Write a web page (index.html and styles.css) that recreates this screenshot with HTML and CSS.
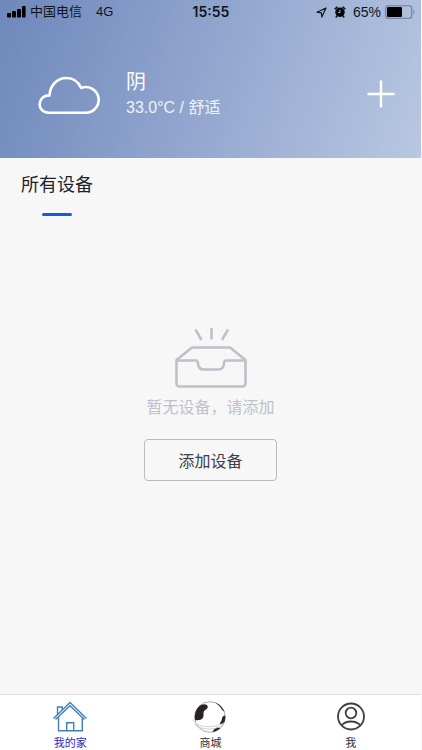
FILE: index.html
```html
<!DOCTYPE html>
<html lang="zh-CN">
<head>
<meta charset="utf-8">
<meta name="viewport" content="width=device-width, initial-scale=1">
<title>我的家</title>
<link rel="stylesheet" href="styles.css">
</head>
<body>
<div class="app">
  <header class="hero">
    <div class="status">
      <div class="status-side">
        <svg class="signal" width="19" height="12" viewBox="0 0 19 12" aria-hidden="true">
          <rect x="0" y="7" width="4" height="4.500" rx="1"/><rect x="5" y="5" width="4" height="6.500" rx="1"/><rect x="10" y="3" width="4" height="8.500" rx="1"/><rect x="15" y="0" width="3.600" height="11.500" rx="1"/>
        </svg>
        <span class="carrier">中国电信</span>
        <span class="network">4G</span>
      </div>
      <time class="clock">15:55</time>
      <div class="status-side status-right">
        <svg width="11" height="11" viewBox="0 0 11 11" aria-hidden="true"><path d="M10 1 1 5.2l4.3.6.5 4.2z" fill="none" stroke="#10131c" stroke-width="1.2" stroke-linejoin="round"/></svg>
        <svg class="alarm" width="12" height="12" viewBox="0 0 12 12" aria-hidden="true"><circle cx="6" cy="6.2" r="4.700"/><path d="M1.200 2.800 3 1.200M10.800 2.800 9 1.200M3 10l-.8 1M9 10l.8 1" stroke="#10131c" stroke-width="1.600" stroke-linecap="round"/><path d="M6 3.800v2.800H4.200" fill="none" stroke="#a9badb"/></svg>
        <span class="percent">65%</span>
        <svg width="30" height="14" viewBox="0 0 30 14" aria-hidden="true"><rect x=".7" y=".7" width="26" height="12.6" rx="2.6" fill="none" stroke="#6f7c95" stroke-width="1.1"/><rect x="2" y="2" width="15" height="10" rx="1.2"/><path d="M28.3 4.8c1.6.8 1.6 3.6 0 4.4z" fill="#6f7c95"/></svg>
      </div>
    </div>
    <div class="weather">
      <svg class="cloud" width="64" height="42" viewBox="0 0 64 42" aria-hidden="true"><path d="M11.500 39.700C-.5 39.500-.5 22.500 12.500 22.400 13 12.500 20 5 29.500 5c7 0 12 4 14.700 10A12.800 12.800 0 1 1 49.500 39.700z" fill="none" stroke="#fff" stroke-width="2.600" stroke-linejoin="round"/></svg>
      <div class="weather-text">
        <h1 class="condition">阴</h1>
        <p class="temperature">33.0°C / 舒适</p>
      </div>
      <button class="plus" type="button" aria-label="添加">
        <svg width="28" height="28" viewBox="0 0 28 28" aria-hidden="true"><path d="M14 .5v27M.5 14h27" stroke="#fff" stroke-width="2.400"/></svg>
      </button>
    </div>
  </header>
  <main class="content">
    <h2 class="tab">所有设备</h2>
    <section class="empty">
      <svg width="74" height="62" viewBox="0 0 74 62" fill="none" stroke="#bfc1c9" stroke-width="2.600" stroke-linejoin="round" aria-hidden="true">
        <path d="M21.500 1.500 27.500 12M37.500 0v11.500M54 1.500 48 12"/>
        <path d="M2.500 32 18 19.500h38L71.500 32v23.500a3 3 0 0 1-3 3H5.500a3 3 0 0 1-3-3z"/>
        <path d="M2.500 32.500h19.500c1.500 0 1.800 1 2 3 .3 3.700 2.300 6 5.500 6h15c3.200 0 5.200-2.300 5.500-6 .2-2 .5-3 2-3h19.500"/>
      </svg>
      <p class="empty-text">暂无设备，请添加</p>
      <button class="add" type="button">添加设备</button>
    </section>
  </main>
  <nav class="tabs">
    <a class="item active" href="#home">
      <svg width="36" height="32" viewBox="0 0 36 32" fill="none" stroke="#4080b5" stroke-width="1.400" aria-hidden="true"><path d="M1.500 17.500 18 1.500l16.500 16M3.500 18.500 18 4.700l14.500 13.800M6.500 16v13.700h23.800V16M5.500 13.500V6h4.700v3M14.700 29.500v-7.700h7v7.700"/></svg>
      <span>我的家</span>
    </a>
    <a class="item" href="#mall">
      <svg width="36" height="32" viewBox="0 0 36 32" aria-hidden="true">
        <defs><clipPath id="ball"><circle cx="18" cy="16" r="15.300"/></clipPath></defs>
        <circle cx="18" cy="16" r="15.300" fill="#fff" stroke="#888" stroke-width=".7"/>
        <g clip-path="url(#ball)" fill="#292222"><path d="M6.500 5.500C10 2.500 15 2.500 15.700 5.500c.5 2.500-3.200 3-4 5.500-.5 2 .3 2.500-.5 5-.8 2.500-3.700 3.800-8.200 3.200-2-4-1-9.500 3.500-13.700z"/><path d="M23 1.500c5 1 9 4.500 10.500 9.500-3-.5-3.500-2.500-5-4.500s-3-3-5.500-5z"/><path d="M34 14.500c-2.500-.5-4.200 1.500-4.200 4 0 2-2 2.300-2 4.500 2 .8 3.500 0 4.700-1.500 1.500-2 2-4.500 1.500-7z"/><path d="M20.500 31.500c.5-2.500 2.500-4.700 5-5 2.500-.2 3.500.5 2 2.300-1.800 1.800-4 2.500-7 2.700z"/></g>
        <path d="M.8 18c3 9 20 10.500 33.500 2.500M2.500 23.500c7 6 20 6 29 .5" fill="none" stroke="#c4c4c4" stroke-width=".8"/>
      </svg>
      <span>商城</span>
    </a>
    <a class="item" href="#me">
      <svg width="36" height="32" viewBox="0 0 36 32" fill="none" stroke="#404044" stroke-width="1.800" aria-hidden="true"><circle cx="18" cy="15.500" r="13"/><circle cx="18" cy="12" r="5.300"/><path d="M8.500 24.500C11 21.500 14 20.500 18 20.500s7 1 9.500 4"/></svg>
      <span>我</span>
    </a>
  </nav>
</div>
</body>
</html>
```
FILE: styles.css
```css
* {
  box-sizing: border-box;
}

body {
  margin: 0;
  font-family: "Liberation Sans", "Noto Sans CJK SC", sans-serif;
  background: #f7f7f8;
}

h1, h2, p {
  margin: 0;
  font-weight: 400;
}

button {
  padding: 0;
  font: inherit;
  background: none;
  border: 0;
}

svg {
  display: block;
  flex: none;
}

.app {
  display: flex;
  flex-direction: column;
  min-height: 100vh;
  padding-right: 1px;
}

.hero {
  padding-bottom: 36px;
  color: #fff;
  background: linear-gradient(110deg, #6e88bb 0%, #91a5ce 48%, #b8c8e2 100%);
}

.status {
  display: grid;
  grid-template-columns: 1fr auto 1fr;
  align-items: center;
  height: 24px;
  padding: 0 6px 0 7px;
  font-size: 13px;
  line-height: 20px;
  color: #10131c;
}

.status-side {
  display: flex;
  align-items: center;
}

.carrier {
  margin-left: 4px;
}

.network {
  margin-left: 14px;
}

.clock {
  font-family: Inter, sans-serif;
  font-size: 14px;
  font-weight: 600;
}

.status-right {
  justify-content: flex-end;
}

.alarm {
  margin-left: 7px;
}

.percent {
  margin: 0 4px 0 7px;
  font-size: 14px;
}

.weather {
  display: flex;
  align-items: center;
  height: 56px;
  margin-top: 42px;
  padding: 0 26px 0 37px;
}

.weather-text {
  flex: 1;
  margin-left: 25px;
}

.condition {
  font-size: 20px;
  line-height: 28px;
}

.temperature {
  font-size: 16px;
  line-height: 24px;
  color: #eff3fa;
}

.content {
  flex: 1;
}

.tab {
  display: flex;
  flex-direction: column;
  align-items: center;
  gap: 14px;
  width: fit-content;
  margin: 13px 0 0 21px;
  font-size: 18px;
  line-height: 28px;
  color: #22232b;
}

.tab::after {
  content: "";
  width: 30px;
  height: 3px;
  border-radius: 2px;
  background: #0a60df;
}

.empty {
  display: flex;
  flex-direction: column;
  align-items: center;
  margin-top: 112px;
}

.empty-text {
  margin-top: 6px;
  font-size: 16px;
  line-height: 24px;
  color: #bfc1c9;
}

.add {
  width: 133px;
  height: 42px;
  margin-top: 19px;
  border: 1px solid #b9bbc0;
  border-radius: 4px;
  font-size: 16px;
  color: #3c3e48;
}

.tabs {
  display: grid;
  grid-template-columns: repeat(3, 1fr);
  height: 56px;
  border-top: 1px solid #dedfe1;
  background: #fff;
}

.item {
  display: flex;
  flex-direction: column;
  align-items: center;
  gap: 1px;
  padding-top: 6px;
  font-size: 11px;
  line-height: 18px;
  color: #303238;
  text-decoration: none;
}

.active {
  color: #2929c8;
}
```
